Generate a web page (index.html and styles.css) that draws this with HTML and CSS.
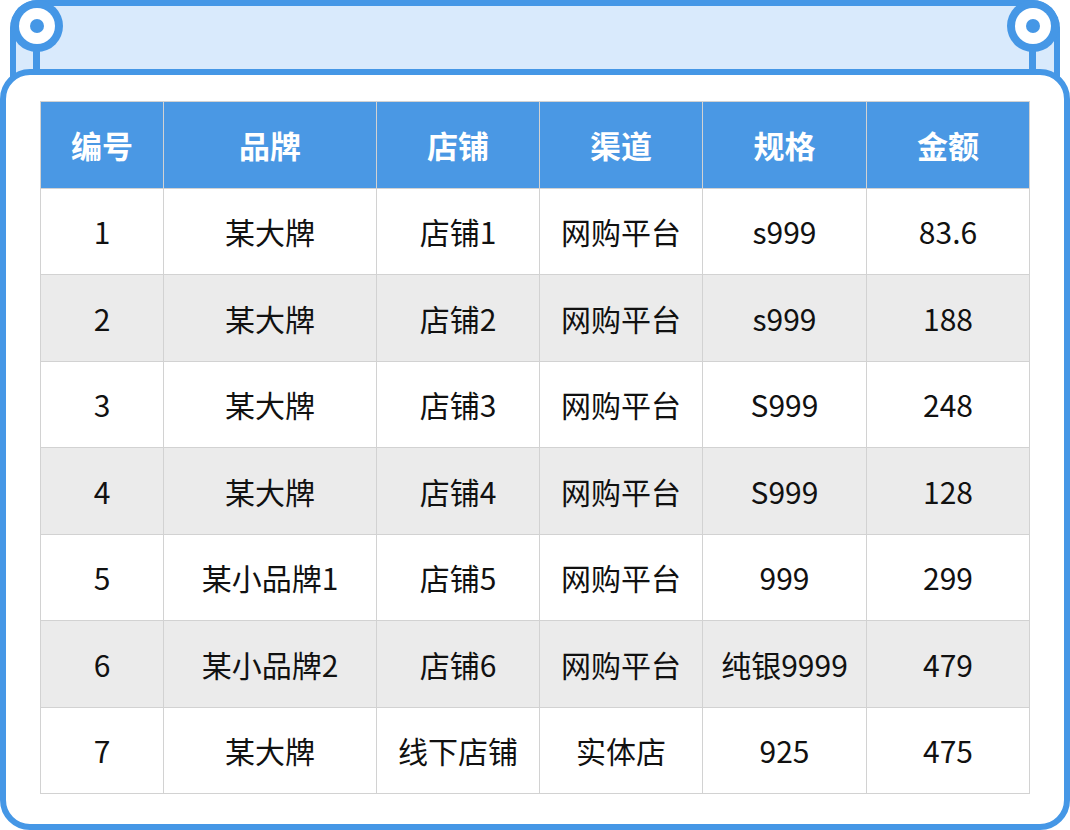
FILE: index.html
```html
<!DOCTYPE html>
<html lang="zh">
<head>
<meta charset="utf-8">
<link rel="stylesheet" href="styles.css">
</head>
<body>
<div class="frame">
  <div class="topbar">
    <span class="knob knob-left"><span class="ring"><span class="dot"></span></span><span class="stem"></span></span>
    <span class="knob knob-right"><span class="ring"><span class="dot"></span></span><span class="stem"></span></span>
  </div>
  <div class="panel">
    <table class="data">
      <colgroup>
        <col class="c1"><col class="c2"><col class="c3"><col class="c4"><col class="c5"><col class="c6">
      </colgroup>
      <thead>
        <tr><th>编号</th><th>品牌</th><th>店铺</th><th>渠道</th><th>规格</th><th>金额</th></tr>
      </thead>
      <tbody>
        <tr><td>1</td><td>某大牌</td><td>店铺1</td><td>网购平台</td><td>s999</td><td>83.6</td></tr>
        <tr><td>2</td><td>某大牌</td><td>店铺2</td><td>网购平台</td><td>s999</td><td>188</td></tr>
        <tr><td>3</td><td>某大牌</td><td>店铺3</td><td>网购平台</td><td>S999</td><td>248</td></tr>
        <tr><td>4</td><td>某大牌</td><td>店铺4</td><td>网购平台</td><td>S999</td><td>128</td></tr>
        <tr><td>5</td><td>某小品牌1</td><td>店铺5</td><td>网购平台</td><td>999</td><td>299</td></tr>
        <tr><td>6</td><td>某小品牌2</td><td>店铺6</td><td>网购平台</td><td>纯银9999</td><td>479</td></tr>
        <tr><td>7</td><td>某大牌</td><td>线下店铺</td><td>实体店</td><td>925</td><td>475</td></tr>
      </tbody>
    </table>
  </div>
</div>
</body>
</html>
```

FILE: styles.css
```css
* { box-sizing: border-box; }
html, body { margin: 0; padding: 0; background: #ffffff; }
body {
  font-family: "Noto Sans CJK SC", "Noto Sans", sans-serif;
  color: #111111;
}
.frame {
  width: 1070px;
  height: 830px;
  display: flex;
  flex-direction: column;
}
.topbar {
  position: relative;
  margin: 0 10px;
  height: 86px;
  flex: 0 0 auto;
  border: 6px solid #4597e6;
  border-bottom: none;
  border-radius: 28px 28px 0 0;
  background: #d9eafc;
}
.knob {
  position: absolute;
  top: -6px;
  width: 52px;
  height: 52px;
  border-radius: 50%;
  background: #4597e6;
  display: flex;
  align-items: center;
  justify-content: center;
}
.knob-left { left: -5px; }
.knob-right { right: -5px; }
.ring {
  width: 36px;
  height: 36px;
  border-radius: 50%;
  background: #ffffff;
  display: flex;
  align-items: center;
  justify-content: center;
}
.dot {
  width: 14px;
  height: 14px;
  border-radius: 50%;
  background: #4597e6;
}
.stem {
  position: absolute;
  left: 22px;
  top: 48px;
  width: 7px;
  height: 24px;
  background: #4597e6;
}
.panel {
  position: relative;
  z-index: 1;
  margin-top: -17px;
  flex: 1 1 auto;
  border: 6px solid #4597e6;
  border-radius: 30px;
  background: #ffffff;
  padding: 26px 35px 0 34px;
}
.data {
  width: 989px;
  border-collapse: collapse;
  table-layout: fixed;
  font-size: 30px;
}
.c1 { width: 123px; }
.c2 { width: 213px; }
.c3 { width: 163px; }
.c4 { width: 163px; }
.c5 { width: 164px; }
.c6 { width: 163px; }
.data th, .data td {
  border: 1px solid #d2d2d2;
  text-align: center;
  vertical-align: middle;
  height: 86.5px;
  padding: 0;
  white-space: nowrap;
}
.data th {
  background: #4a98e4;
  color: #ffffff;
  font-weight: 700;
  font-size: 31px;
}
.data td {
  font-weight: 400;
  color: #111111;
}
.data tbody tr:nth-child(even) td { background: #ebebeb; }
```
